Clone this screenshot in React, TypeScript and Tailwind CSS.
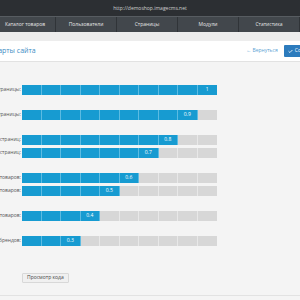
import { Check } from "lucide-react";

const navItems = ["Каталог товаров", "Пользователи", "Страницы", "Модули", "Статистика"];

interface Row {
  label: string;
  value: number;
  gapTop: number;
}

const rows: Row[] = [
  { label: "Главной страницы:", value: 1, gapTop: 0 },
  { label: "Категорий страницы:", value: 0.9, gapTop: 15 },
  { label: "Подкатегорий страниц:", value: 0.8, gapTop: 15 },
  { label: "Обычных страниц:", value: 0.7, gapTop: 3 },
  { label: "Категорий товаров:", value: 0.6, gapTop: 15 },
  { label: "Подкатегорий товаров:", value: 0.5, gapTop: 3 },
  { label: "Страниц товаров:", value: 0.4, gapTop: 15 },
  { label: "Страниц брендов:", value: 0.3, gapTop: 15 },
];

const Bar = ({ value }: { value: number }) => {
  const filled = Math.round(value * 10);
  return (
    <div className="grid grid-cols-10 w-[195px] h-[10px]">
      {Array.from({ length: 10 }).map((_, i) => {
        const on = i < filled;
        return (
          <div
            key={i}
            className={
              on
                ? "bg-[#179bd1] border-r border-[#5cbbe2] last:border-r-0 flex items-center justify-center text-[5px] text-white"
                : "bg-[#d7d7d7] border-r border-[#e8e8e8] last:border-r-0"
            }
          >
            {on && i === filled - 1 ? String(value) : null}
          </div>
        );
      })}
    </div>
  );
};

export default function App() {
  return (
    <div className="w-[300px] h-[300px] overflow-hidden bg-[#f4f4f4] font-['Open_Sans',sans-serif]">
      {/* top bar */}
      <div className="h-[16px] bg-[#2c2f33] text-center text-[5px] leading-[16px] text-[#d0d0d0]">
        http://demoshop.imagecms.net
      </div>

      {/* nav */}
      <div className="h-[16px] bg-[#42474c] border-t border-[#575c61] flex -ml-[5px]">
        {navItems.map((item) => (
          <div
            key={item}
            className="w-[61px] shrink-0 border-r border-[#303438] flex items-center justify-center text-[5px] text-[#e4e4e4]"
          >
            {item}
          </div>
        ))}
      </div>

      <div className="h-[9px] bg-[#ededed]" />

      {/* header */}
      <div className="h-[21px] bg-white border-b border-[#e2e2e2] flex items-center justify-between">
        <div className="-ml-[44px] whitespace-nowrap text-[7px] text-[#3d8cc4]">Настройки карты сайта</div>
        <div className="flex items-center gap-[6px] -mr-[25px]">
          <span className="text-[5px] text-[#5d9fd4]">← Вернуться</span>
          <span className="h-[12px] px-[4px] bg-[#2c7bbd] rounded-[1px] flex items-center gap-[2px] text-[5px] text-white">
            <Check size={5} strokeWidth={4} />
            Сохранить
          </span>
        </div>
      </div>

      {/* bars */}
      <div className="pt-[23px] flex flex-col">
        {rows.map((row) => (
          <div key={row.label} className="flex items-center" style={{ marginTop: row.gapTop }}>
            <div className="w-[22px] overflow-hidden flex justify-end pr-[1px]">
              <span className="whitespace-nowrap text-[5px] text-[#555]">{row.label}</span>
            </div>
            <Bar value={row.value} />
          </div>
        ))}

        <div className="pl-[22px] mt-[15px]">
          <button className="h-[10px] px-[4px] bg-[#f0f0f0] border border-[#d8d8d8] rounded-[1px] text-[5px] text-[#444] leading-none">
            Просмотр кода
          </button>
        </div>
      </div>

      <div className="mt-[10px] border-t border-[#e2e2e2]" />
    </div>
  );
}
